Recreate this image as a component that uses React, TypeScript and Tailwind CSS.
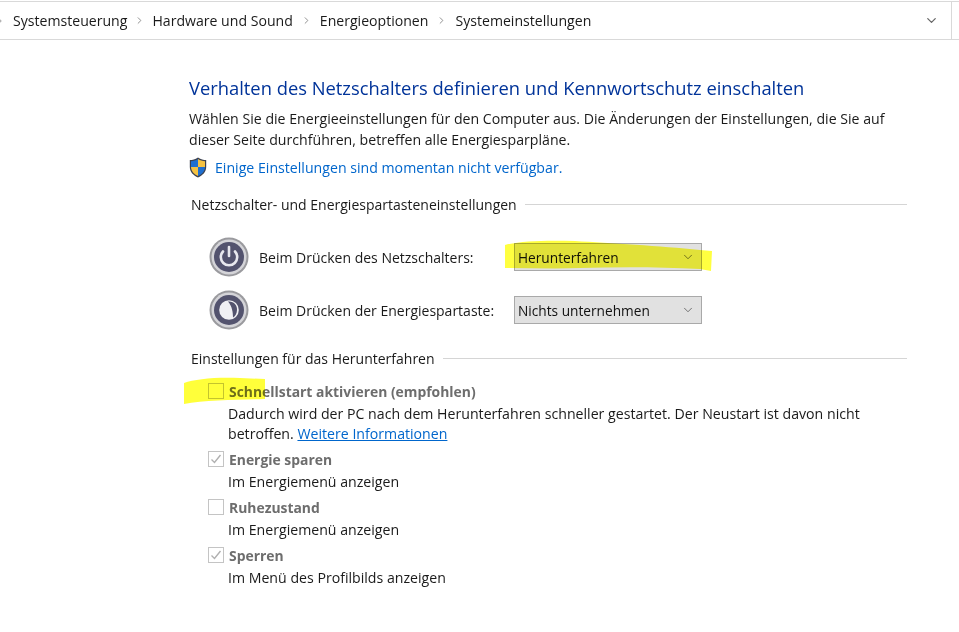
import React from "react";
import { ChevronDown, ChevronRight } from "lucide-react";

const crumbs = ["Systemsteuerung", "Hardware und Sound", "Energieoptionen", "Systemeinstellungen"];

const Orb: React.FC<{ children: React.ReactNode }> = ({ children }) => (
  <svg width="40" height="40" viewBox="0 0 40 40" className="shrink-0">
    <circle cx="20" cy="20" r="19.5" fill="#9a9a9e" />
    <circle cx="20" cy="20" r="17.5" fill="#d4d4d8" />
    <circle cx="20" cy="20" r="15" fill="#53536e" />
    {children}
  </svg>
);

const Section: React.FC<{ title: string; children: React.ReactNode }> = ({ title, children }) => (
  <section>
    <div className="flex h-[20px] items-center gap-[8px] pl-[2px]">
      <span className="whitespace-nowrap text-[14px]">{title}</span>
      <div className="h-px flex-1 bg-[#d5d5d5]" />
    </div>
    {children}
  </section>
);

const DropRow: React.FC<{ label: string; value: string; icon: React.ReactNode }> = ({ label, value, icon }) => (
  <div className="flex h-[40px] items-center">
    <div className="box-content w-[50px] shrink-0 pl-[20px]">{icon}</div>
    <span className="w-[255px] shrink-0 whitespace-nowrap text-[14px]">{label}</span>
    <div className="flex h-[28px] w-[188px] items-center justify-between border border-[#a9a9a9] bg-[#e1e1e1] pl-[3px] pr-[6px] text-[13.7px] text-[#111]">
      <span>{value}</span>
      <ChevronDown size={14} strokeWidth={1.2} className="text-[#444]" />
    </div>
  </div>
);

const Box: React.FC<{ checked?: boolean }> = ({ checked }) => (
  <div className="flex h-[16px] w-[16px] shrink-0 items-center justify-center border border-[#c4c4c4] bg-white">
    {checked && (
      <svg width="12" height="12" viewBox="0 0 12 12" fill="none">
        <path d="M1.5 6.5 L4.5 9.5 L10.5 2" stroke="#b0b0b0" strokeWidth="1.4" />
      </svg>
    )}
  </div>
);

const Option: React.FC<{ label: string; checked?: boolean; children: React.ReactNode }> = ({ label, checked, children }) => (
  <div>
    <div className="flex h-[24px] items-center gap-[4px] pl-[19px]">
      <Box checked={checked} />
      <span className="ml-[1px] text-[13.9px] font-bold text-[#6d6d6d]">{label}</span>
    </div>
    <div className="pl-[39px] pr-[40px] pt-px leading-[20px]">{children}</div>
  </div>
);

export default function App() {
  return (
    <div className="relative h-[632px] w-[959px] overflow-hidden bg-white font-['Open_Sans','Liberation_Sans',sans-serif] text-[14.15px] leading-[21px] text-[#1a1a1a]">
      {/* breadcrumb bar */}
      <header className="mt-px flex h-[39px] items-center border-y border-[#d9d9d9] text-[14.1px]">
        <div className="flex flex-1 items-center">
          <ChevronRight size={10} className="-ml-[5px] mr-[8px] text-[#888]" />
          {crumbs.map((c, i) => (
            <React.Fragment key={c}>
              {i > 0 && (
                <ChevronRight
                  size={11}
                  strokeWidth={2}
                  className={i === 1 ? "ml-[7px] mr-[7px] text-[#888]" : "mx-[8px] text-[#888]"}
                />
              )}
              <span className="whitespace-nowrap">{c}</span>
            </React.Fragment>
          ))}
        </div>
        <div className="flex h-full w-[40px] items-center justify-center">
          <ChevronDown size={15} strokeWidth={2} className="text-[#666]" />
        </div>
        <div className="mr-[7px] h-full w-px bg-[#d9d9d9]" />
      </header>

      <main className="ml-[189px] w-[718px]">
        <h1 className="mt-[35px] whitespace-nowrap text-[18.35px] leading-[26px] text-[#003399]">
          Verhalten des Netzschalters definieren und Kennwortschutz einschalten
        </h1>
        <p className="mt-[7px] pr-[10px] leading-[21px]">
          Wählen Sie die Energieeinstellungen für den Computer aus. Die Änderungen der Einstellungen, die Sie auf dieser Seite durchführen, betreffen alle Energiesparpläne.
        </p>
        <div className="mt-[7px] flex items-center gap-[8px]">
          <svg width="18" height="21" viewBox="0 0 18 21" className="shrink-0">
            <path d="M9 0.5 C6 2.5 3.5 3 0.8 3 V10 C0.8 15 4.5 18.5 9 20.5 C13.5 18.5 17.2 15 17.2 10 V3 C14.5 3 12 2.5 9 0.5 Z" fill="#3d4250" />
            <path d="M9 2 V10 H2 V4.2 C4.5 4 7 3.4 9 2 Z" fill="#1f6fd0" />
            <path d="M9 2 C11 3.4 13.5 4 16 4.2 V10 H9 Z" fill="#f5c242" />
            <path d="M2 10 H9 V19 C5 17.2 2.2 14.2 2 10 Z" fill="#f5c242" />
            <path d="M9 10 H16 C15.8 14.2 13 17.2 9 19 Z" fill="#1f6fd0" />
          </svg>
          <a className="text-[#0066cc]">Einige Einstellungen sind momentan nicht verfügbar.</a>
        </div>

        <div className="mt-[16px]">
          <Section title="Netzschalter- und Energiespartasteneinstellungen">
            <div className="mt-[23px] flex flex-col gap-[13px]">
              <DropRow
                label="Beim Drücken des Netzschalters:"
                value="Herunterfahren"
                icon={
                  <Orb>
                    <path d="M14 14.5 A8.2 8.2 0 1 0 26 14.5" fill="none" stroke="#e8e8ee" strokeWidth="2.6" strokeLinecap="round" />
                    <path d="M20 10 V19" stroke="#e8e8ee" strokeWidth="2.6" strokeLinecap="round" />
                  </Orb>
                }
              />
              <DropRow
                label="Beim Drücken der Energiespartaste:"
                value="Nichts unternehmen"
                icon={
                  <Orb>
                    <circle cx="20" cy="20" r="9.8" fill="#f0f0f4" />
                    <path d="M19 11.5 C25 11 28.5 15.5 28 20 C27.8 23.5 26.5 26 24 27.5 C24 22 23 16 19 11.5 Z" fill="#53536e" />
                  </Orb>
                }
              />
            </div>
          </Section>
        </div>

        <div className="mt-[18px]">
          <Section title="Einstellungen für das Herunterfahren">
            <div className="mt-[11px] flex flex-col gap-[3px]">
              <Option label="Schnellstart aktivieren (empfohlen)">
                Dadurch wird der PC nach dem Herunterfahren schneller gestartet. Der Neustart ist davon nicht betroffen.{" "}
                <a className="text-[#0066cc] underline">Weitere Informationen</a>
              </Option>
              <Option label="Energie sparen" checked>Im Energiemenü anzeigen</Option>
              <Option label="Ruhezustand">Im Energiemenü anzeigen</Option>
              <Option label="Sperren" checked>Im Menü des Profilbilds anzeigen</Option>
            </div>
          </Section>
        </div>
      </main>

      {/* marker strokes over the page */}
      <svg width="959" height="632" className="pointer-events-none absolute left-0 top-0 mix-blend-multiply">
        <path d="M505 245 C520 241 545 240 575 241 C610 243 660 246 700 250 L712 251 L711 271 L700 269 C660 267 620 267 580 268 C555 269 530 268 505 268 Z" fill="#ffff40" />
        <path d="M184 383 C195 379 215 377 240 378 L265 379 L265 399 C240 400 205 400 184 404 Z" fill="#ffff3a" />
      </svg>
    </div>
  );
}
